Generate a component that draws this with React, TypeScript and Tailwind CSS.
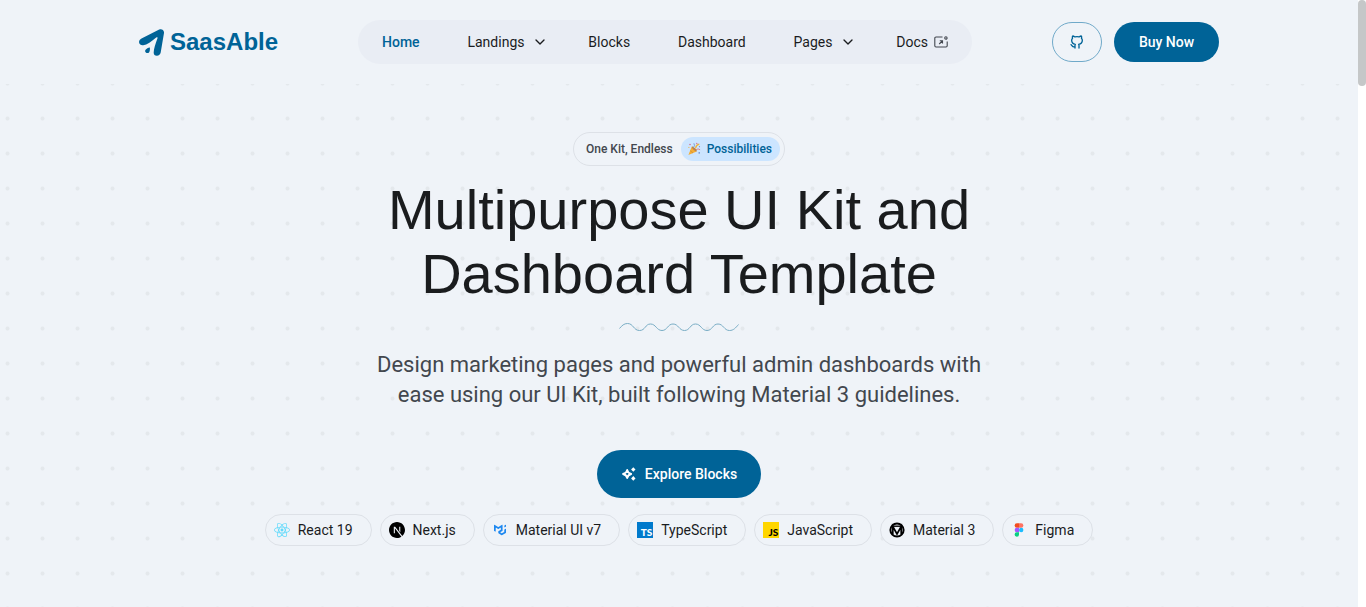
import React from 'react';
import type { ReactNode } from 'react';
import { TbBrandGithub, TbChevronDown } from 'react-icons/tb';
import { SiMui, SiNextdotjs, SiReact } from 'react-icons/si';

function Logo() {
  return (
    <a href="#" className="flex items-center gap-1.5 text-[#006397]">
      <svg viewBox="0 0 25 27" className="h-[27px] w-[25px]" fill="currentColor" aria-hidden="true">
        <path d="M20.2.6C22.700-.5 25.300 1.100 25 4.100L21.700 23.600c-.4 2.100-1.900 3.300-4 3.200-1.900-.1-3.100-1.500-3-3.300.1-3.400 1.800-9 3.800-14.200l-.2-1.200-1.100.4C12.600 12.600 8 15.700 4.200 16.300 2.200 16.600.4 15.500.1 13.600-.2 11.800.8 10.300 2.500 9.400Z" />
        <path d="M10.900 18.400c.1 2.700-.2 4.300-.9 5-.8.9-2.300.8-3.200 0s-.9-2.100 0-3c.7-.8 2.100-1.600 4.100-2Z" />
      </svg>
      <span className="font-['Liberation_Sans',Arial,sans-serif] text-2xl font-bold">SaasAble</span>
    </a>
  );
}

function ExternalIcon() {
  return (
    <svg viewBox="0 0 14 12" className="h-3 w-3.5" fill="none" stroke="#42474e" strokeWidth="1.1" aria-hidden="true">
      <path d="M8.500 1H2Q.8 1 .8 2.200V9.800Q.8 11 2 11H12Q13.200 11 13.200 9.800V5.500" />
      <path d="M5.200 8 8.300 5M5.800 4.700h2.700v2.700" />
      <circle cx="11.900" cy="1.900" r="1.200" />
    </svg>
  );
}

function PartyIcon() {
  return (
    <svg viewBox="0 0 14 14" className="size-3.5" aria-hidden="true">
      <path d="M1.400 12.900 4.800 4.600Q8.500 5.800 9.600 9.500Z" fill="#f4ae35" />
      <path d="M3.200 8.600 6 11.100" stroke="#d08a3a" strokeWidth=".8" />
      <ellipse cx="7.300" cy="7" rx="3.300" ry="1" transform="rotate(45 7.300 7)" fill="#b98050" />
      <path d="M6.600 5.300Q8.300 3.900 6.900 1.300" stroke="#7b9fd8" strokeWidth="1" fill="none" />
      <path d="M8.600 6.200Q9 3 12.300 2.200" stroke="#eeb43c" strokeWidth="1.200" fill="none" />
      <path d="M9 7.800Q11 6 13.100 7.700" stroke="#dc8c86" strokeWidth="1" fill="none" />
      <circle cx="3" cy="2.500" r=".8" fill="#d66f93" />
      <circle cx="9.800" cy="1.500" r=".7" fill="#d66f93" />
      <circle cx="12.200" cy="10.900" r=".8" fill="#6b91d9" />
      <circle cx="12.500" cy="4.700" r=".6" fill="#6b91d9" />
      <circle cx="1.900" cy="5.300" r=".6" fill="#eeb43c" />
    </svg>
  );
}

function SparkIcon() {
  return (
    <svg viewBox="0 0 16 16" className="size-4" fill="none" stroke="currentColor" aria-hidden="true">
      <path d="M6.200 3.900Q6.900 7.300 10.200 8 6.900 8.700 6.200 12.100 5.500 8.700 2 8 5.500 7.300 6.200 3.900Z" strokeWidth="1.800" strokeLinejoin="round" />
      <path d="M12.300 1.200 14.500 3.500 12.300 5.800 10.100 3.500Z" fill="currentColor" stroke="none" />
      <path d="M12.300 10.100 14.500 12.400 12.300 14.700 10.100 12.400Z" fill="currentColor" stroke="none" />
    </svg>
  );
}

function MaterialIcon() {
  return (
    <svg viewBox="0 0 16 16" className="size-4" fill="none" stroke="#000" aria-hidden="true">
      <circle cx="8" cy="8" r="6.600" strokeWidth="2" />
      <path d="M3.800 12.300V4.500L8 12 12.200 4.500V12.300" strokeWidth="1.700" />
      <path d="M3.800 4.200H12.200" strokeWidth="1.400" />
    </svg>
  );
}

function LetterMark({ letters, className }: { letters: string; className: string }) {
  return (
    <span className={`flex size-4 items-end justify-end pr-px font-['Lato',sans-serif] text-[10px] leading-[11px] font-black ${className}`} aria-hidden="true">
      {letters}
    </span>
  );
}

function FigmaIcon() {
  return (
    <svg viewBox="0 0 16 16" className="size-4" aria-hidden="true">
      <path d="M8 1.300H5.900a2.200 2.200 0 0 0 0 4.500H8Z" fill="#f24e1e" />
      <path d="M8 1.300h2.100a2.200 2.200 0 0 1 0 4.500H8Z" fill="#ff7262" />
      <path d="M8 5.800H5.900a2.200 2.200 0 0 0 0 4.500H8Z" fill="#a259ff" />
      <circle cx="10.200" cy="8" r="2.200" fill="#1abcfe" />
      <path d="M8 10.300H5.900A2.200 2.200 0 1 0 8 12.500Z" fill="#0acf83" />
    </svg>
  );
}

function Wave() {
  return (
    <svg viewBox="0 0 120 10" className="h-2.5 w-[120px]" fill="none" stroke="#79adc5" strokeWidth="1" aria-hidden="true">
      <path d="M.5 6.500C3 3.500 5 1.500 8.500 1.500 14.500 1.500 14.500 8.500 20.500 8.500S26 2 31.500 2 37.500 8.500 43 8.500 48.500 2 54 2 60 8.500 65.500 8.500 71 2 76.500 2 82.500 8.500 88 8.500 93.500 2 99 2 105 8.500 110.500 8.500C114.500 8.500 116.500 6 119.500 2.500" />
    </svg>
  );
}

type NavItem = { label: string; active?: boolean; menu?: boolean; external?: boolean };
const navItems: NavItem[] = [
  { label: 'Home', active: true },
  { label: 'Landings', menu: true },
  { label: 'Blocks' },
  { label: 'Dashboard' },
  { label: 'Pages', menu: true },
  { label: 'Docs', external: true },
];

const stack: { label: string; icon: ReactNode }[] = [
  { label: 'React 19', icon: <SiReact className="size-4 text-[#61dafb]" /> },
  { label: 'Next.js', icon: <SiNextdotjs className="size-4 text-black" /> },
  { label: 'Material UI v7', icon: <SiMui className="size-4 p-0.5 text-[#1e88f0]" /> },
  { label: 'TypeScript', icon: <LetterMark letters="TS" className="bg-[#007acc] text-white" /> },
  { label: 'JavaScript', icon: <LetterMark letters="JS" className="bg-[#ffd600] text-black" /> },
  { label: 'Material 3', icon: <MaterialIcon /> },
  { label: 'Figma', icon: <FigmaIcon /> },
];

export default function App() {
  return (
    <div className="flex min-h-screen bg-[#eff3f8] font-['Roboto',sans-serif] text-[#1a1c1e]">
      <div className="flex min-w-0 flex-1 flex-col">
        <header className="mx-auto flex w-full max-w-[1080px] items-center justify-between py-5">
          <Logo />
          <nav aria-label="Main" className="w-[614px] rounded-full bg-[#e9edf4] px-6 py-3">
            <ul className="flex items-center justify-between text-sm">
              {navItems.map((item) => (
                <li key={item.label} className={item.menu ? '-mr-2' : ''}>
                  <a
                    href="#"
                    className={`flex items-center ${item.menu ? 'gap-2' : 'gap-1.5'} ${item.active ? 'font-medium text-[#006397]' : ''}`}
                  >
                    {item.label}
                    {item.menu && <TbChevronDown className="size-4" />}
                    {item.external && <ExternalIcon />}
                  </a>
                </li>
              ))}
            </ul>
          </nav>
          <div className="flex gap-3">
            <a href="#" aria-label="GitHub" className="flex h-10 w-[50px] items-center justify-center rounded-full border border-[#6fa9c9] text-[#006397]">
              <TbBrandGithub className="size-4" />
            </a>
            <button type="button" className="h-10 w-[105px] rounded-full bg-[#006397] text-sm font-medium text-white">
              Buy Now
            </button>
          </div>
        </header>

        <main className="flex flex-1 flex-col items-center bg-[radial-gradient(circle,#e4e8ec_1.5px,transparent_2.5px)] bg-[length:35px_35px] bg-[position:-10px_17px] px-4 pt-12 pb-14 text-center">
          <div className="flex items-center gap-2 rounded-full border border-[#dde1e7] bg-[#eff3f8] p-1 pl-3 text-xs font-medium text-[#42474e]">
            One Kit, Endless
            <span className="flex h-6 items-center gap-1.5 rounded-full bg-[#cce5ff] pr-2 pl-1.5 text-[#006397]">
              <PartyIcon />
              Possibilities
            </span>
          </div>
          <h1 className="mt-3 max-w-[650px] font-['Liberation_Sans',Arial,sans-serif] text-[56px] leading-16">
            Multipurpose UI Kit and Dashboard Template
          </h1>
          <div className="mt-4">
            <Wave />
          </div>
          <p className="mt-[18px] max-w-[650px] text-[22px] leading-[30px] text-[#42474e]">
            Design marketing pages and powerful admin dashboards with ease using our UI Kit, built following Material 3 guidelines.
          </p>
          <button type="button" className="mt-10 flex h-12 w-[164px] items-center justify-center gap-2 rounded-full bg-[#006397] text-sm font-medium text-white">
            <SparkIcon />
            Explore Blocks
          </button>
          <ul className="mt-4 flex flex-wrap justify-center gap-2">
            {stack.map((item) => (
              <li key={item.label} className="flex h-8 items-center gap-2 rounded-full border border-[#dde1e7] bg-[#eff3f8] pr-[18px] pl-2 text-sm">
                {item.icon}
                {item.label}
              </li>
            ))}
          </ul>
        </main>
      </div>
      <div className="w-2 bg-white" aria-hidden="true">
        <div className="h-[86px] rounded-full bg-[#c5c7c8]" />
      </div>
    </div>
  );
}
